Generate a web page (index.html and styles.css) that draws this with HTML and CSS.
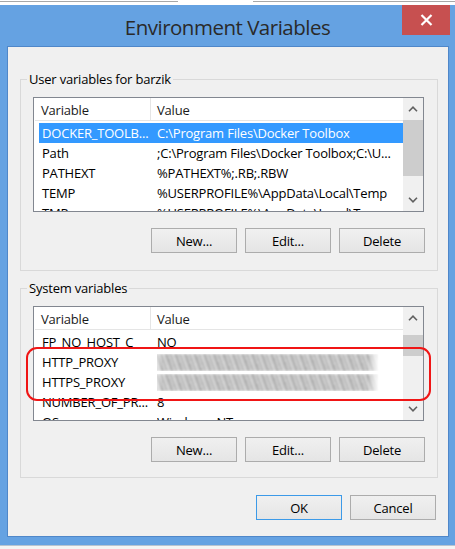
FILE: index.html
```html
<!DOCTYPE html>
<html lang="en">
<head>
<meta charset="utf-8">
<title>Environment Variables</title>
<link rel="stylesheet" href="styles.css">
</head>
<body>
<div class="screen-top"><div class="edge"></div><div class="edge"></div></div>
<div class="window">
  <div class="titlebar">
    <div class="title">Environment Variables</div>
    <button class="close" aria-label="Close"><svg width="13" height="12" viewBox="0 0 13 12"><path d="M1.5 1 L11.5 11 M11.5 1 L1.5 11" stroke="#fff" stroke-width="2.2" fill="none"/></svg></button>
  </div>
  <div class="panel">
    <fieldset class="group">
      <legend>User variables for barzik</legend>
      <div class="listbox">
        <div class="list-main">
          <div class="list-header"><span class="hcol hvar">Variable</span><span class="hcol">Value</span></div>
          <div class="list-rows">
            <div class="row selected"><span class="var">DOCKER_TOOLB...</span><span class="val">C:\Program Files\Docker Toolbox</span></div>
            <div class="row"><span class="var">Path</span><span class="val">;C:\Program Files\Docker Toolbox;C:\U...</span></div>
            <div class="row"><span class="var">PATHEXT</span><span class="val">%PATHEXT%;.RB;.RBW</span></div>
            <div class="row"><span class="var">TEMP</span><span class="val">%USERPROFILE%\AppData\Local\Temp</span></div>
            <div class="row"><span class="var">TMP</span><span class="val">%USERPROFILE%\AppData\Local\Temp</span></div>
          </div>
        </div>
        <div class="scrollbar">
          <div class="sb-btn"><svg width="10" height="6" viewBox="0 0 10 6"><path d="M1 5.2 L5 1.2 L9 5.2" stroke="#606060" stroke-width="1.6" fill="none"/></svg></div>
          <div class="sb-track"><div class="sb-thumb" style="margin-top:0px;height:56px"></div></div>
          <div class="sb-btn"><svg width="10" height="6" viewBox="0 0 10 6"><path d="M1 0.8 L5 4.8 L9 0.8" stroke="#606060" stroke-width="1.6" fill="none"/></svg></div>
        </div>
      </div>
      <div class="btn-row">
        <button class="btn">New...</button>
        <button class="btn">Edit...</button>
        <button class="btn">Delete</button>
      </div>
    </fieldset>
    <fieldset class="group">
      <legend>System variables</legend>
      <div class="listbox">
        <div class="list-main">
          <div class="list-header"><span class="hcol hvar">Variable</span><span class="hcol">Value</span></div>
          <div class="list-rows">
            <div class="row"><span class="var">FP_NO_HOST_C</span><span class="val">NO</span></div>
            <div class="row"><span class="var">HTTP_PROXY</span><span class="val"><span class="smudge"></span></span></div>
            <div class="row"><span class="var">HTTPS_PROXY</span><span class="val"><span class="smudge"></span></span></div>
            <div class="row"><span class="var">NUMBER_OF_PR...</span><span class="val">8</span></div>
            <div class="row"><span class="var">OS</span><span class="val">Windows_NT</span></div>
          </div>
        </div>
        <div class="scrollbar">
          <div class="sb-btn"><svg width="10" height="6" viewBox="0 0 10 6"><path d="M1 5.2 L5 1.2 L9 5.2" stroke="#606060" stroke-width="1.6" fill="none"/></svg></div>
          <div class="sb-track"><div class="sb-thumb" style="margin-top:6px;height:21px"></div></div>
          <div class="sb-btn"><svg width="10" height="6" viewBox="0 0 10 6"><path d="M1 0.8 L5 4.8 L9 0.8" stroke="#606060" stroke-width="1.6" fill="none"/></svg></div>
        </div>
        <div class="highlight-ring"></div>
      </div>
      <div class="btn-row">
        <button class="btn">New...</button>
        <button class="btn">Edit...</button>
        <button class="btn">Delete</button>
      </div>
    </fieldset>
    <div class="dialog-buttons">
      <button class="btn btn-default">OK</button>
      <button class="btn">Cancel</button>
    </div>
  </div>
</div>
<div class="screen-bottom"></div>
</body>
</html>
```
FILE: styles.css
```css
* { box-sizing: border-box; }
html, body { margin: 0; padding: 0; }
body {
  width: 455px;
  height: 549px;
  overflow: hidden;
  background: #fff;
  font-family: "Open Sans", "Noto Sans", sans-serif;
  font-size: 13px;
  letter-spacing: -0.2px;
  color: #000;
}
.screen-top {
  height: 5px;
  padding-top: 1px;
  display: flex;
  gap: 75px;
  background: #fff;
}
.screen-top .edge { height: 1px; background: #a8a8a8; }
.screen-top .edge:first-child { width: 178px; }
.screen-top .edge:last-child { flex: 1; }

.window {
  height: 540px;
  background: #65a2e2;
  display: flex;
  flex-direction: column;
}
.titlebar {
  height: 41px;
  flex: none;
  display: grid;
  grid-template-columns: 1fr auto 1fr;
}
.title {
  grid-column: 2;
  padding-top: 8px;
  font-size: 20.5px;
  line-height: 28px;
  letter-spacing: -0.5px;
  color: #2a2a2a;
  white-space: nowrap;
}
.close {
  grid-column: 3;
  justify-self: end;
  align-self: start;
  width: 48px;
  height: 30px;
  margin-right: 5px;
  padding: 0;
  border: 0;
  background: #c75050;
  display: flex;
  align-items: center;
  justify-content: center;
}
.panel {
  flex: 1;
  margin: 0 6px 8px 7px;
  background: #f0f0f0;
  border: 1px solid #4f87c9;
  padding: 23px 10px 15px 12px;
  display: flex;
  flex-direction: column;
}
.group {
  margin: 0;
  min-width: 0;
  border: 1px solid #d9d9d9;
  padding: 9px 12px 17px 12px;
}
.group + .group { margin-top: 8px; padding-bottom: 15px; }
.group legend {
  padding: 0 2px;
  margin-left: -6px;
  line-height: 18px;
}
.listbox {
  position: relative;
  width: 391px;
  height: 115px;
  border: 1px solid #828790;
  background: #fff;
  display: flex;
}
.list-main {
  flex: 1;
  min-width: 0;
  padding-left: 1px;
  display: flex;
  flex-direction: column;
}
.list-header {
  flex: none;
  height: 23px;
  border-bottom: 1px solid #e5e5e5;
  display: flex;
  color: #1a1a1a;
  line-height: 22px;
}
.hcol { padding-left: 6px; padding-top: 1px; }
.hvar { width: 116px; border-right: 1px solid #e5e5e5; }
.list-rows {
  flex: 1;
  overflow: hidden;
  padding: 2px 0 0 4px;
}
.row {
  height: 20px;
  line-height: 20px;
  display: grid;
  grid-template-columns: 118px 1fr;
  white-space: nowrap;
}
.row span { overflow: hidden; }
.row .var { padding-left: 3px; }
.row.selected { background: #3399ff; color: #fff; }
.smudge {
  display: block;
  width: 228px;
  height: 17px;
  margin: 2px 0 0 -6px;
  background: repeating-linear-gradient(70deg, #bdbdbd 0 2px, #999 2px 3px, #d6d6d6 3px 5px, #aaa 5px 6px, #c8c8c8 6px 8px, #e2e2e2 8px 9px);
  filter: blur(1px);
  -webkit-mask-image: linear-gradient(to right, transparent, #000 5%, #000 95%, transparent);
  mask-image: linear-gradient(to right, transparent, #000 5%, #000 95%, transparent);
}
.scrollbar {
  flex: none;
  width: 20px;
  background: #f0f0f0;
  display: flex;
  flex-direction: column;
}
.sb-btn {
  flex: none;
  height: 22px;
  display: flex;
  align-items: center;
  justify-content: center;
}
.sb-track { flex: 1; }
.sb-thumb { background: #cdcdcd; }
.highlight-ring {
  position: absolute;
  left: -8px;
  top: 40px;
  width: 405px;
  height: 54px;
  border: 2px solid #f01515;
  border-radius: 11px;
  pointer-events: none;
}
.btn-row {
  display: flex;
  justify-content: flex-end;
  gap: 8px;
  margin-top: 16px;
}
.btn {
  width: 86px;
  height: 25px;
  padding: 0;
  border: 1px solid #acacac;
  background: linear-gradient(#f0f0f0, #e5e5e5);
  font-family: inherit;
  font-size: 13px;
  letter-spacing: -0.2px;
  color: #000;
  line-height: 22px;
}
.btn-default { border-color: #3c9ae8; }
.dialog-buttons {
  display: flex;
  justify-content: flex-end;
  gap: 8px;
  margin-top: 17px;
  margin-right: 2px;
}
.screen-bottom {
  height: 4px;
  background: #f4f4f4;
  border-top: 1px solid #b8c4d0;
}
```
